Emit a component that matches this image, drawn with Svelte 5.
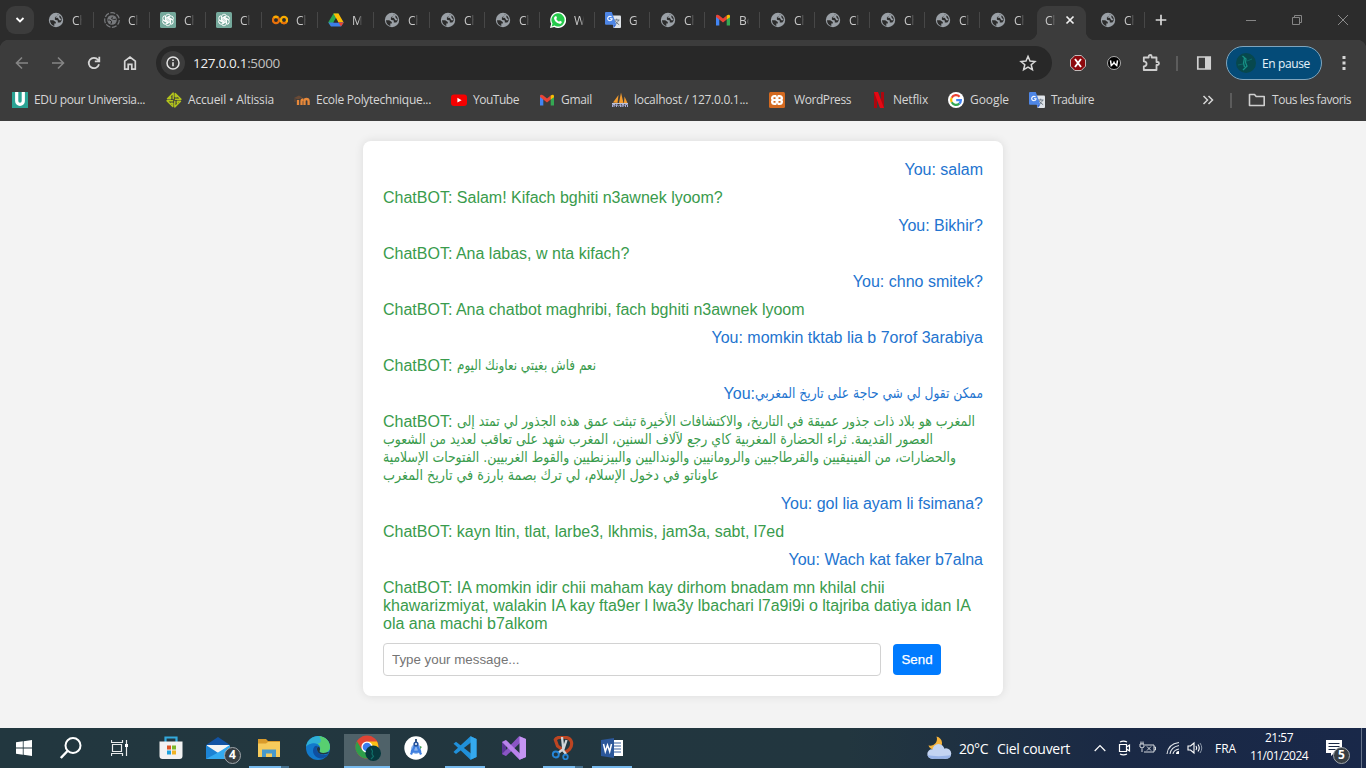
<script>
  const tabs = [
    ['globe', 'Ch'], ['dashed', 'Ch'], ['gpt', 'Ch'], ['gpt', 'Ch'], ['colab', 'Ch'], ['drive', 'M'],
    ['globe', 'Ch'], ['globe', 'Ch'], ['globe', 'Ch'], ['whatsapp', 'W'], ['translate', 'G'], ['globe', 'Ch'],
    ['gmail', 'Bo'], ['globe', 'Ch'], ['globe', 'Ch'], ['globe', 'Ch'], ['globe', 'Ch'], ['globe', 'Ch']
  ];

  // icon, label, slot width, icon gap, label width
  const bookmarks = [
    ['edu', 'EDU pour Universia...', 154, 6, 111],
    ['altissia', 'Accueil • Altissia', 128, 6, 86],
    ['moodle', 'Ecole Polytechnique...', 157, 6, 115],
    ['youtube', 'YouTube', 88, 6, 46],
    ['gmail', 'Gmail', 73, 6, 31],
    ['pma', 'localhost / 127.0.0.1...', 157, 6, 114],
    ['xampp', 'WordPress', 102, 9, 57],
    ['netflix', 'Netflix', 77, 6, 35],
    ['google', 'Google', 81, 6, 39],
    ['translate', 'Traduire', 90, 6, 43]
  ];

  const messages = [
    { who: 'user', text: 'You: salam' },
    { who: 'bot', text: 'ChatBOT: Salam! Kifach bghiti n3awnek lyoom?' },
    { who: 'user', text: 'You: Bikhir?' },
    { who: 'bot', text: 'ChatBOT: Ana labas, w nta kifach?' },
    { who: 'user', text: 'You: chno smitek?' },
    { who: 'bot', text: 'ChatBOT: Ana chatbot maghribi, fach bghiti n3awnek lyoom' },
    { who: 'user', text: 'You: momkin tktab lia b 7orof 3arabiya' },
    { who: 'bot', lines: [['ChatBOT: ', 'نعم فاش بغيتي نعاونك اليوم', 139]] },
    { who: 'user', lines: [['You:', 'ممكن تقول لي شي حاجة على تاريخ المغربي', 228]] },
    {
      who: 'bot',
      lines: [
        ['ChatBOT: ', 'المغرب هو بلاد ذات جذور عميقة في التاريخ، والاكتشافات الأخيرة تبثت عمق هذه الجذور لي تمتد إلى', 518],
        ['', 'العصور القديمة. ثراء الحضارة المغربية كاي رجع لآلاف السنين، المغرب شهد على تعاقب لعديد من الشعوب', 550],
        ['', 'والحضارات، من الفينيقيين والقرطاجيين والرومانيين والونداليين والبيزنطيين والقوط الغربيين. الفتوحات الإسلامية', 573],
        ['', 'عاوناتو في دخول الإسلام، لي ترك بصمة بارزة في تاريخ المغرب', 336]
      ]
    },
    { who: 'user', text: 'You: gol lia ayam li fsimana?' },
    { who: 'bot', text: 'ChatBOT: kayn ltin, tlat, larbe3, lkhmis, jam3a, sabt, l7ed' },
    { who: 'user', text: 'You: Wach kat faker b7alna' },
    {
      who: 'bot',
      text: 'ChatBOT: IA momkin idir chii maham kay dirhom bnadam mn khilal chii khawarizmiyat, walakin IA kay fta9er l lwa3y lbachari l7a9i9i o ltajriba datiya idan IA ola ana machi b7alkom'
    }
  ];

  // Spreads letter spacing so that a label takes a given width.
  function fit(node, width) {
    const natural = node.getBoundingClientRect().width;
    node.style.letterSpacing = (width - natural) / node.textContent.length + 'px';
  }
</script>

{#snippet icon(name)}
  <svg class="ico" viewBox="0 0 16 16" width="16" height="16">
    {#if name === 'globe'}
      <circle cx="8" cy="8" r="7.2" fill="#9aa0a6" />
      <path d="M2 8.2h3.2l2.6 1.7v1.6H6.3v2.4C3.800 13.200 2 11 2 8.200zM9 2.200v2L7.300 5.800H9.800L11.300 8.200H13.800M10 2.400C12.600 3.400 14 5.600 13.900 8.600L12.300 10.600H9.800V8.500L6.900 7.700V5.300L9.100 3.900z" fill="#2c2c2c" />
      <path d="M9.200 2.500 12 3.500 10.800 5.300H9z" fill="#9aa0a6" />
    {:else if name === 'dashed'}
      <circle cx="8" cy="8" r="7.300" fill="none" stroke="#77797c" stroke-width="1.200" stroke-dasharray="5 1.500" />
      <circle cx="8" cy="8" r="4.800" fill="#77797c" />
      <path d="M3.800 8h2l1.700 1.200v2H6.500M8.700 4.800 7.500 6.500 9.700 7.500 12 7.200" fill="none" stroke="#2c2c2c" stroke-width="1" />
    {:else if name === 'gpt'}
      <rect width="16" height="16" rx="1.500" fill="#75a99c" />
      <g fill="none" stroke="#fff" stroke-width=".9">
        {#each [0, 60, 120, 180, 240, 300] as a}
          <path transform="rotate({a} 8 8)" d="M5.400 9.500V4.900A2.700 2.700 0 0 1 10.200 3.300M6.900 8.700V5.900L10.600 3.800" />
        {/each}
      </g>
    {:else if name === 'colab'}
      <circle cx="4" cy="8" r="3.100" fill="none" stroke="#e8710a" stroke-width="2.300" />
      <path d="M6 5.700A3.100 3.100 0 0 0 1.700 5.800" fill="none" stroke="#f9ab00" stroke-width="2.300" />
      <circle cx="12" cy="8" r="3.100" fill="none" stroke="#f9ab00" stroke-width="2.300" />
      <path d="M9.800 10.200A3.100 3.100 0 0 0 14.200 10.200" fill="none" stroke="#e8710a" stroke-width="2.300" />
    {:else if name === 'drive'}
      <path d="M5.500 1.500h5L8 6 3 14.500.300 10.300z" fill="#28a851" />
      <path d="M5.500 1.500h5l5.200 9H10.400z" fill="#fbbc04" />
      <path d="M.300 10.500h15.400L13 14.600H3z" fill="#3d7de8" />
      <path d="M10.400 10.500h5.300L13 14.600z" fill="#ea4335" />
      <path d="M8 6.200 10.300 10.400H5.600z" fill="#2c2c2c" />
    {:else if name === 'whatsapp'}
      <path d="M0 16 1.200 11.800A8 8 0 1 1 4.200 14.900z" fill="#fff" />
      <path d="M1.600 14.400 2.500 11.600A6.600 6.600 0 1 1 4.600 13.600z" fill="#25c94b" />
      <path d="M5.200 4.200 6.400 4.300 7 6 6.200 7.100C6.900 8.400 7.700 9.100 9 9.700L10 8.700 11.800 9.700C11.900 11.400 10.400 11.900 9.400 11.700 6.700 11.100 4.700 9.200 4.100 6.800 3.900 5.700 4.500 4.500 5.200 4.200z" fill="#fff" />
    {:else if name === 'translate'}
      <path d="M6 3.500h9a1 1 0 0 1 1 1V15a1 1 0 0 1-1 1H8.500z" fill="#dfe3e8" />
      <path d="M9 8h5.500M11.700 6.700V8M13.500 8C13 10 11.500 11.500 9.500 12.700M10.200 8.700C11 10.500 12.500 11.700 14.200 12.700" fill="none" stroke="#64717d" stroke-width=".900" />
      <path d="M1 0h5.800l4.500 12.800H1a1 1 0 0 1-1-1V1a1 1 0 0 1 1-1z" fill="#4e86e6" />
      <path d="M8 12.800h3.300L8.800 16z" fill="#3367d6" />
      <path d="M6.500 5A2.200 2.200 0 1 0 7.100 6.700H5" fill="none" stroke="#fff" stroke-width="1.100" />
    {:else if name === 'gmail'}
      <path d="M1 3v10.500H4.300V6.500z" fill="#4285f4" />
      <path d="M15 3v10.500H11.700V6.500z" fill="#34a853" />
      <path d="M1 4.500C1 2.500 2.700 2.200 4.300 3.600L8 6.500 11.700 3.600V7.500L8 10.400 4.300 7.500 1 5z" fill="#ea4335" />
      <path d="M11.700 3.600C13.500 2.200 15 2.600 15 4.500V5.200L11.700 7.600z" fill="#fbbc04" />
    {:else if name === 'edu'}
      <rect width="16" height="16" fill="#2aa394" />
      <path d="M4.700 0V9A3.300 3.300 0 0 0 11.300 9V0" fill="none" stroke="#fff" stroke-width="3.200" />
    {:else if name === 'altissia'}
      <g fill="none" stroke="#b3c41c" stroke-width="1.400" stroke-linejoin="round">
        {#each [0, 90, 180, 270] as a}
          <path transform="rotate({a} 8 8)" d="M7.200 7.200V1L1.500 6.800H4.700V4.500" />
        {/each}
      </g>
    {:else if name === 'moodle'}
      <path d="M4 13V8M7.500 13V9.500Q7.500 7.500 9.300 7.500M10.500 13V9Q10.500 7 12.500 7T14.600 9V13" fill="none" stroke="#e8893a" stroke-width="2.300" />
      <path d="M0 6 5 3.500 8.500 5.500 4 7.500z" fill="#6a4a35" />
      <path d="M1 6.500V10" stroke="#6a4a35" />
    {:else if name === 'youtube'}
      <rect y="2.400" width="16" height="11.500" rx="3" fill="#f50000" />
      <path d="M6.400 5.700v4.900L10.600 8.200z" fill="#fff" />
    {:else if name === 'pma'}
      <path d="M1 10.500 6.500 3 5.500 11zM7 11 9 .500 11.500 11zM12 11 12.500 4.500 15.500 11z" fill="#f29b2e" />
      <path d="M0 11.500H16" stroke="#bdc4da" />
      <path d="M.500 15V12.500H3V14H1M4.500 15V12.300L6.500 14 8.500 12.300V15M10 15V12.500H12V14H10M13.500 15V12.500H15.500V15" fill="none" stroke="#a8add5" />
    {:else if name === 'xampp'}
      <rect width="16" height="16" rx="1.500" fill="#d46a20" />
      <rect x="2" y="3" width="12" height="10" rx="3.500" fill="#fff" />
      <path d="M7 2.500H9L8 5zM7 13.500H9L8 11zM1.500 7 3 8 1.500 9zM14.500 7 13 8 14.500 9zM4.500 5.300H6.500V7H4.500zM9.500 5.300h2V7h-2zM4.500 9H6.500v1.700h-2zM9.500 9h2v1.700h-2z" fill="#d46a20" />
    {:else if name === 'netflix'}
      <path d="M3 0H6V16H3zM10 0h3V16H10z" fill="#ad070f" />
      <path d="M3 0H7L13 16H9z" fill="#e30914" />
    {:else if name === 'google'}
      <circle cx="8" cy="8" r="8" fill="#fff" />
      <g fill="none" stroke-width="2.200">
        <path d="M11.600 4.700A4.900 4.900 0 0 0 3.700 5.700" stroke="#ea4335" />
        <path d="M3.700 5.700A4.900 4.900 0 0 0 3.700 10.300" stroke="#fbbc04" />
        <path d="M3.700 10.300A4.900 4.900 0 0 0 11.300 11.600" stroke="#34a853" />
        <path d="M11.300 11.600A4.900 4.900 0 0 0 12.900 8.100H8.200" stroke="#4285f4" />
      </g>
    {/if}
  </svg>
{/snippet}

<div class="screen">
  <div class="tabstrip">
    <div class="chev"><svg width="12" height="12" viewBox="0 0 12 12"><path d="M2.500 4 6 7.500 9.500 4" fill="none" stroke="#fff" stroke-width="1.800" /></svg></div>
    {#each tabs as [name, label], i}
      <div class="tab" class:narrow={i > 6} class:last={i === 17}>{@render icon(name)}<span class="cap">{label}</span></div>
    {/each}
    <div class="tab active"><span class="cap">Ch</span><svg width="10" height="10" viewBox="0 0 10 10"><path d="M1.500 1.500l7 7M8.500 1.500l-7 7" stroke="#f0f0f0" stroke-width="1.700" /></svg></div>
    <div class="tab after">{@render icon('globe')}<span class="cap">Ch</span></div>
    <svg class="plus" width="12" height="12" viewBox="0 0 12 12"><path d="M6 .700V11.300M.700 6H11.300" stroke="#d8d8d8" stroke-width="1.700" /></svg>
    <div class="winctl">
      <svg width="12" height="12" viewBox="0 0 12 12"><path d="M1 6.500h10" stroke="#858585" /></svg>
      <svg width="12" height="12" viewBox="0 0 12 12"><path d="M1.500 3.500h7v7h-7zM3.500 3V1.500h7v7H9" fill="none" stroke="#858585" /></svg>
      <svg width="12" height="12" viewBox="0 0 12 12"><path d="M1 1l10 10M11 1 1 11" stroke="#8c8c8c" /></svg>
    </div>
  </div>

  <div class="toolbar">
    <div class="nav">
      <svg width="16" height="16" viewBox="0 0 16 16"><path d="M14 8H2.700M8 2.500 2.500 8 8 13.500" fill="none" stroke="#858585" stroke-width="1.600" /></svg>
      <svg width="16" height="16" viewBox="0 0 16 16"><path d="M2 8H13.300M8 2.500 13.500 8 8 13.500" fill="none" stroke="#858585" stroke-width="1.600" /></svg>
      <svg width="16" height="16" viewBox="0 0 16 16"><path d="M13 9.300A5.200 5.200 0 1 1 12 4.700L13.300 6M13.300 1.800V6.300H8.800" fill="none" stroke="#d6d6d6" stroke-width="1.800" /></svg>
      <svg width="16" height="16" viewBox="0 0 16 16"><path d="M2.700 14.200V6.200L8 2l5.300 4.200v8H9.800V9.300H6.200V14.200z" fill="none" stroke="#d6d6d6" stroke-width="1.700" /></svg>
    </div>
    <div class="omni">
      <div class="info"><svg width="16" height="16" viewBox="0 0 16 16"><circle cx="8" cy="8" r="6" fill="none" stroke="#e3e3e3" stroke-width="1.500" /><path d="M8 7.300V11.300M8 4.500V6" stroke="#e3e3e3" stroke-width="1.600" /></svg></div>
      <span class="url" use:fit={87}>127.0.0.1<i>:5000</i></span>
      <svg class="star" width="18" height="18" viewBox="0 0 18 18"><path d="M9 2.300 11 7 16 7.500 12.200 10.800 13.400 15.700 9 13.100 4.600 15.700 5.800 10.800 2 7.500 7 7z" fill="none" stroke="#d8d8d8" stroke-width="1.500" /></svg>
    </div>
    <div class="ext">
      <svg width="18" height="18" viewBox="0 0 18 18"><path d="M5.800 1.500h6.400L16.500 5.800v6.400L12.200 16.500H5.800L1.500 12.200V5.800z" fill="#8d090d" stroke="#ccc" stroke-width=".9" /><path d="M6 5l6 8M12 5l-6 8" stroke="#fff" stroke-width="1.900" /></svg>
      <svg width="16" height="16" viewBox="0 0 16 16"><circle cx="8" cy="8" r="6.500" fill="#000" stroke="#bbb" stroke-width=".9" /><path d="M4.500 5.300 5.300 10.500 8 8V6.500M8 8 10.700 10.500 11.500 5.300" fill="none" stroke="#fff" stroke-width="1.500" /></svg>
      <svg width="18" height="18" viewBox="0 0 18 18"><path d="M1.800 3.500H6.700V2.500a1.500 1.500 0 0 1 3 0v1H14.500V8h1a1.500 1.500 0 0 1 0 3h-1v5H1.800V12.300C5.500 12.300 5.500 7.300 1.800 7.300z" fill="none" stroke="#cecece" stroke-width="1.800" stroke-linejoin="round" /></svg>
      <b class="bar"></b>
      <svg width="16" height="16" viewBox="0 0 16 16"><path d="M1.800 2h12.400v12H1.800z" fill="none" stroke="#d0d0d0" stroke-width="1.700" /><path d="M9 2h5v12H9z" fill="#d0d0d0" /></svg>
      <div class="pill">
        <svg width="20" height="20" viewBox="0 0 20 20"><circle cx="10" cy="10" r="10" fill="#07484d" /><path d="M6.500 3 10 6 9.500 9.500 11 13 7 17M8.500 5 7.500 10 8.500 14" fill="none" stroke="#169185" stroke-width="1.300" /><path d="M2 12 7 11M11 8 16 6" stroke="#0d6a68" /></svg>
        <span use:fit={48}>En pause</span>
      </div>
      <svg width="4" height="16" viewBox="0 0 4 16"><path d="M.500 1h3v3h-3zM.500 6.500h3v3h-3zM.500 12h3v3h-3z" fill="#d6d6d6" /></svg>
    </div>
  </div>

  <div class="bookmarks">
    {#each bookmarks as [name, label, slot, gap, width]}
      <div class="bm" style="width: {slot}px; gap: {gap}px">{@render icon(name)}<span use:fit={width}>{label}</span></div>
    {/each}
    <div class="bmend">
      <svg width="12" height="12" viewBox="0 0 12 12"><path d="M1.500 2 5.500 6 1.500 10M6.500 2 10.500 6 6.500 10" fill="none" stroke="#d6d6d6" stroke-width="1.500" /></svg>
      <b class="bar"></b>
      <svg width="18" height="14" viewBox="0 0 18 14"><path d="M1.500 1.500h5l1.700 2h8v9H1.500z" fill="none" stroke="#cecece" stroke-width="1.600" stroke-linejoin="round" /></svg>
      <span use:fit={79}>Tous les favoris</span>
    </div>
  </div>

  <main>
    <div class="card">
      {#each messages as m}
        <div class="msg {m.who}">
          {#if m.text}
            {m.text}
          {:else}
            {#each m.lines as [lead, words, width]}
              <div class="line"><span>{lead}</span><svg {width} height="18"><text x="0" y="13" direction="ltr" textLength={width} lengthAdjust="spacingAndGlyphs">{words}</text></svg></div>
            {/each}
          {/if}
        </div>
      {/each}
      <div class="form">
        <input type="text" placeholder="Type your message..." />
        <button>Send</button>
      </div>
    </div>
  </main>

  <footer>
    <div class="apps">
      <div class="app"><svg width="16" height="16" viewBox="0 0 16 16"><path d="M0 2.300 6.800 1.300V7.600H0zM7.600 1.200 16 0V7.600H7.600zM0 8.400H6.800V14.700L0 13.700zM7.600 8.400H16V16L7.600 14.800z" fill="#fff" /></svg></div>
      <div class="app nudge"><svg width="24" height="24" viewBox="0 0 24 24"><circle cx="14" cy="9.500" r="7.500" fill="none" stroke="#fff" stroke-width="2" /><path d="M8.500 15 1.800 22" stroke="#fff" stroke-width="2.500" /></svg></div>
      <div class="app nudge"><svg width="18" height="18" viewBox="0 0 18 18"><path d="M.500 1V3.500h11V1M.500 17V14.500h11V17M1.500 5.500h9v7h-9zM15.500 1V17" fill="none" stroke="#e8eaeb" stroke-width="1.200" /><path d="M14 5h3v3h-3z" fill="#fff" /></svg></div>
      <div class="app"><svg width="24" height="24" viewBox="0 0 24 24"><path d="M6.500 6V1.500h11V6" fill="none" stroke="#33a9dc" stroke-width="2.200" /><path d="M.500 5.500h23V20a3 3 0 0 1-3 3h-17a3 3 0 0 1-3-3z" fill="#f2f2f2" /><path d="M8 9.500h4v4H8z" fill="#dd5425" /><path d="M13 9.500h4v4h-4z" fill="#7bb829" /><path d="M8 14.500h4v4H8z" fill="#20a2dd" /><path d="M13 14.500h4v4h-4z" fill="#f0b323" /></svg></div>
      <div class="app nudge"><svg width="24" height="24" viewBox="0 0 24 24"><path d="M0 9 12 1 24 9V12H0z" fill="#1253a4" /><path d="M1 9h22v9H1z" fill="#f4f4f4" /><path d="M0 9 13 17.500 24 9V23H0z" fill="#1c83d4" /><path d="M0 23 12 16.500 24 9V23z" fill="#33aaf0" /></svg><em class="badge mail">4</em></div>
      <div class="app run split"><svg width="24" height="24" viewBox="0 0 24 24"><path d="M1 3h8l2 2h12v4H1z" fill="#d99b2b" /><path d="M1 7.500H9L11 6H23V21H1z" fill="#f6cb5c" /><path d="M5 21V13.500h14V21H15V17.500H9V21z" fill="#4799cc" /></svg></div>
      <div class="app"><svg width="24" height="24" viewBox="0 0 24 24"><circle cx="12" cy="12" r="12" fill="#1279cb" /><path d="M0 11C1 3.500 7 0 12 0 19 0 24 5 24 11 24 15 20.500 17 17 17 14 17 12.800 15.800 13.800 14.300 15.500 11 12.500 7.300 8.500 7.300 4.500 7.300 1 9 0 11z" fill="#2fb0d6" /><path d="M13 0C20 .500 24 5.500 24 11 24 15 20.500 17 17 17 14 17 12.800 15.800 13.800 14.300 15 11.500 14 9 11.500 7.700 15 7.500 16 4 13 0z" fill="#58cf70" /><path d="M8.500 10.500C4.500 16 9 22.500 16 22.500 19 22 21.500 20 22.500 18 17 20.500 11.500 18 10.800 13.500 10.700 12 11.200 11 12 10.300 11 9.500 9.500 9.500 8.500 10.500z" fill="#0f4fa0" /><path d="M11 13.500C11.500 18 17 20 22.500 17 23 16.300 22.500 15.800 21.500 16.200 17.500 17.500 12.500 17 13.700 14.500 14.500 13 14 11 12.300 10.400 11.300 11.200 11 12 11 13.500z" fill="#22363f" /></svg></div>
      <div class="app run current"><svg width="26" height="26" viewBox="0 0 26 26"><circle cx="12" cy="12" r="11.500" fill="#e04434" /><path d="M2 6.200A11.500 11.500 0 0 0 12 23.500L17 15 12 12 7 15z" fill="#2f9e4a" /><path d="M22 6.500A11.500 11.500 0 0 1 12 23.500L16.500 14.500 13 6.500z" fill="#fbc116" /><circle cx="12" cy="12" r="5.600" fill="#fff" /><circle cx="12" cy="12" r="4.300" fill="#3b7ded" /><circle cx="18.200" cy="18.200" r="7.800" fill="#07393e" /><path d="M16 13.500 17.500 16 17 19 18.500 21.500 16 24" fill="none" stroke="#0f6f69" stroke-width="1.200" /></svg></div>
      <div class="app"><svg width="24" height="24" viewBox="0 0 24 24"><circle cx="12" cy="12" r="11.700" fill="#fff" /><circle cx="12" cy="13" r="5" fill="#8fb5ea" /><path d="M12 7 7 18.500M12 7l5 11.500M7 14.500Q12 17 17 14.500" fill="none" stroke="#3f7fe0" stroke-width="2.200" /><path d="M12 3V6" stroke="#24466f" stroke-width="1.800" /><circle cx="12" cy="8" r="2.600" fill="#24529c" /><circle cx="12" cy="8" r="1" fill="#fff" /><path d="M16 10l2 1-2 2z" fill="#46a652" /></svg></div>
      <div class="app run"><svg width="24" height="24" viewBox="0 0 24 24"><path d="M17.500.300 23.500 3V21L17.500 23.800 2 9 .500 7.800 3 5.800 18 17.500V6.500L3 18 .500 16 1.700 14.800z" fill="#2090da" /><path d="M17.500.300 23.500 3V21L17.500 23.800z" fill="#35a9ee" /></svg></div>
      <div class="app"><svg width="24" height="24" viewBox="0 0 24 24"><path d="M0 6 4 4V20L0 18z" fill="#5b3596" /><path d="M4 20 0 18 17 .300 24 3 18 7z" fill="#8a55c4" /><path d="M0 6 4 4 18 17.500 24 21 17.500 23.800z" fill="#b982ea" /><path d="M17.500.300 24 3V21L17.500 23.800z" fill="#c595f3" /></svg></div>
      <div class="app run split"><svg width="24" height="24" viewBox="0 0 24 24"><path d="M4 4C6 0 19-.5 20.500 6 21.500 12 17 15.500 13 16.500M4 3 6.500 10 12 14" fill="none" stroke="#bd4522" stroke-width="3.200" /><path d="M11 1 12.500 15 15 18M15.500 4 12.500 13 7 17" fill="none" stroke="#d0d5d9" stroke-width="2.300" /><circle cx="4.800" cy="18.500" r="3" fill="none" stroke="#2585d6" stroke-width="1.900" /><circle cx="14.500" cy="21" r="2.300" fill="none" stroke="#2585d6" stroke-width="1.800" /></svg></div>
      <div class="app run"><svg width="24" height="24" viewBox="0 0 24 24"><path d="M12 4h11v16H12z" fill="#fff" /><path d="M14 7h7M14 10h7M14 13h7M14 16h7" stroke="#345f9f" /><path d="M1 4 14 2V22L1 20z" fill="#2b579a" /><path d="M3.500 8 5.300 15.500 7.500 9 9.700 15.500 11.500 8" fill="none" stroke="#fff" stroke-width="1.500" /></svg></div>
    </div>
    <div class="weather">
      <svg width="26" height="24" viewBox="0 0 26 24"><path d="M10.500.500C17 2 18 10 12.500 13 8 15 3.500 13 2.500 9.500 8 10.500 12.500 6 10.500.500z" fill="#f6b43c" /><g fill="#c3d4f2"><circle cx="12.500" cy="14" r="6" /><circle cx="6" cy="18" r="4.700" /><circle cx="20" cy="17.500" r="5.200" /><path d="M6 15H20V22.700H6z" /></g><path d="M1.500 19C6 20.500 19 20.500 25 19 24.500 21.500 22.500 22.700 20 22.700H6C4 22.700 2 21.500 1.500 19z" fill="#98b4e8" /></svg>
      <span use:fit={29}>20°C</span><span class="sky" use:fit={73}>Ciel couvert</span>
    </div>
    <div class="tray">
      <svg width="12" height="8" viewBox="0 0 12 8"><path d="M.700 7 6 1.500 11.300 7" fill="none" stroke="#fff" stroke-width="1.200" /></svg>
      <svg class="cam" width="14" height="16" viewBox="0 0 14 16"><path d="M1.500 4.500h7v7h-7zM8.500 7 11.500 5V11L8.500 9M2 2Q5.500 .300 9 2M2 14Q5.500 15.700 9 14" fill="none" stroke="#fff" stroke-width="1.200" /></svg>
      <svg class="batt" width="18" height="14" viewBox="0 0 18 14"><path d="M6 4h9v7H5M15 6h1.500v3H15M1 3h4V6Q3 8 1 6zM2 3V.500M4 3V.500M3 7.500V11M8 5.500l4 4M12 5.500l-4 4" fill="none" stroke="#d6dbe0" stroke-width="1" /></svg>
      <svg class="wifi" width="14" height="14" viewBox="0 0 14 14"><g fill="none" stroke="#dfe3e8" stroke-width="1.100"><path d="M1 13Q2 3 13 1.500M4 13Q5 6 13 4.500M7 13Q7.500 9 13 8" /></g><path d="M10 13a3 3 0 0 1 3-3v3z" fill="#fff" /></svg>
      <svg class="vol" width="16" height="14" viewBox="0 0 16 14"><path d="M1 5H3.500L7 2V12L3.500 9H1zM9 5Q10.500 7 9 9M11 3.500Q13.500 7 11 10.500" fill="none" stroke="#fff" stroke-width="1.100" /><path d="M13 2Q16.500 7 13 12" fill="none" stroke="#8d99aa" /></svg>
      <span class="lang" use:fit={21}>FRA</span>
      <div class="clock"><span use:fit={28}>21:57</span><span use:fit={58}>11/01/2024</span></div>
      <div class="notes"><svg width="16" height="16" viewBox="0 0 16 16"><path d="M0 0h16v13H8L5 16V13H0z" fill="#fff" /><path d="M2.500 3.500h11M2.500 6.500h11M2.500 9.500h7" stroke="#1a2945" /></svg><em class="badge">5</em></div>
      <b class="peek"></b>
    </div>
  </footer>
</div>

<style>
  :global(body) { margin: 0; overflow: hidden; }
  .screen { width: 1366px; height: 768px; display: flex; flex-direction: column; background: #f3f3f3; font-family: 'Open Sans', 'Noto Sans', sans-serif; font-size: 12px; color: #d6d6d6; }
  svg { display: block; flex: none; }
  span { white-space: nowrap; }
  .tabstrip { height: 40px; flex: none; display: flex; align-items: center; background: #2c2c2c; }
  .chev { width: 28px; height: 28px; margin: 0 4px 0 6px; border-radius: 9px; background: #3c3c3c; display: grid; place-items: center; flex: none; }
  .tab { box-sizing: border-box; width: 56px; height: 16px; padding-left: 10px; display: flex; align-items: center; gap: 8px; border-right: 1px solid #474747; flex: none; }
  .tab.narrow { width: 55px; }
  .tab.last { border-color: transparent; }
  .cap { width: 10px; overflow: hidden; line-height: 17px; color: #c8c8c8; mask-image: linear-gradient(90deg, #000 65%, transparent); }
  .tab.active { position: relative; width: 49px; height: 34px; margin: 6px 0 0 2px; padding: 0 11px 6px 8px; border: 0; border-radius: 9px 9px 0 0; background: #3c3c3c; justify-content: space-between; gap: 0; }
  .tab.active::before, .tab.active::after { content: ''; position: absolute; bottom: 0; width: 9px; height: 9px; }
  .tab.active::before { left: -9px; background: radial-gradient(circle at 0 0, transparent 9px, #3c3c3c 9.500px); }
  .tab.active::after { right: -9px; background: radial-gradient(circle at 100% 0, transparent 9px, #3c3c3c 9.500px); }
  .tab.after { width: 59px; padding-left: 14px; }
  .plus { margin-left: 10px; }
  .winctl { margin-left: auto; margin-right: 17px; display: flex; gap: 34px; }
  .toolbar { height: 46px; flex: none; display: flex; align-items: center; background: linear-gradient(#3c3c3c, #3c3c3c) 0 9px no-repeat, radial-gradient(circle at 9px 9px, #3c3c3c 9px, #2c2c2c 9.500px) 0 0 / 9px 9px no-repeat, radial-gradient(circle at 0 9px, #3c3c3c 9px, #2c2c2c 9.500px) 100% 0 / 9px 9px no-repeat, #3c3c3c; }
  .nav { width: 156px; padding-left: 14px; box-sizing: border-box; display: flex; gap: 20px; }
  .omni { box-sizing: border-box; width: 896px; height: 34px; border-radius: 17px; background: #282828; display: flex; align-items: center; padding: 0 15px 0 5px; }
  .info { width: 24px; height: 24px; border-radius: 50%; background: #3c3c3c; display: grid; place-items: center; }
  .url { margin-left: 8px; font-size: 13.500px; color: #f0f0f0; }
  .url i { font-style: normal; color: #c2c2c2; }
  .star { margin-left: auto; }
  .ext { flex: 1; display: flex; align-items: center; padding-left: 17px; }
  .ext > :nth-child(2) { margin-left: 19px; }
  .ext > :nth-child(3) { margin-left: 20px; }
  .ext > :nth-child(4) { margin-left: 16px; }
  .ext > :nth-child(5) { margin-left: 18px; }
  .ext > :nth-child(7) { margin-left: 20px; }
  .bar { width: 2px; height: 15px; background: #5c5c5c; }
  .pill { box-sizing: border-box; width: 96px; height: 34px; margin-left: 14px; padding-left: 9px; border: 1px solid #7fa5bd; border-radius: 17px; background: #044b78; display: flex; align-items: center; gap: 6px; color: #e6f3fb; }
  .bookmarks { height: 35px; flex: none; box-sizing: border-box; padding: 0 15px 7px 12px; display: flex; align-items: center; background: #3c3c3c; }
  .bm { display: flex; align-items: center; flex: none; }
  .bm span, .bmend span { padding-bottom: 1px; }
  .bmend { margin-left: auto; display: flex; align-items: center; }
  .bmend .bar { margin: 0 16px; }
  .bmend span { margin-left: 6px; }
  main { height: 607px; flex: none; box-sizing: border-box; padding-top: 20px; background: #f3f3f3; }
  .card { box-sizing: border-box; width: 640px; height: 555px; margin: 0 auto; padding: 20px; border-radius: 8px; background: #fff; box-shadow: 0 0 10px rgba(0, 0, 0, .1); font: 16px/18px 'Liberation Sans', Arial, sans-serif; }
  .msg { margin-bottom: 10px; }
  .user { text-align: right; color: #2374cf; }
  .bot { color: #399b4c; }
  .line { display: flex; height: 18px; }
  .line span { white-space: pre; }
  .line svg { overflow: visible; }
  .line text { font: 14.500px 'DejaVu Sans', sans-serif; fill: currentColor; }
  .user .line { justify-content: flex-end; }
  .form { display: flex; align-items: center; gap: 12px; }
  input { box-sizing: border-box; width: 498px; height: 33px; margin: 0; padding: 8px; border: 1px solid #d2d2d2; border-radius: 4px; font: 13.330px 'Liberation Sans', Arial, sans-serif; }
  input::placeholder { color: #757575; }
  button { width: 48px; height: 31px; padding: 0; border: 0; border-radius: 4px; background: #007bff; color: #fff; font: 13.330px 'Liberation Sans', Arial, sans-serif; -webkit-text-stroke: .25px #fff; }
  footer { height: 40px; flex: none; display: flex; align-items: center; background: linear-gradient(90deg, #22373f 0, #22363f 62%, #1a2945 82%, #192849); color: #fff; font-size: 14px; }
  .apps { display: flex; height: 40px; }
  .app { position: relative; box-sizing: border-box; width: 49px; display: grid; place-items: center; }
  .app:first-child { width: 48px; }
  .app.nudge { padding-right: 3px; }
  .run::after { content: ''; position: absolute; left: 5px; right: 4px; bottom: 0; height: 2px; background: #76b9ed; }
  .run.split::after { background: linear-gradient(90deg, #76b9ed 80%, #45708e 80%); }
  .app.current { background: linear-gradient(#4f6269, #4f6269) 2px 6px / 46px 34px no-repeat; padding-left: 2px; }
  .current::after { left: 2px; right: 1px; }
  .badge { position: absolute; right: 3px; bottom: 4px; box-sizing: border-box; width: 17px; height: 17px; border: 1px solid #a0a6ab; border-radius: 50%; background: #373e43; color: #fff; font: 700 12px/14px 'Open Sans', sans-serif; text-align: center; }
  .weather { display: flex; align-items: center; margin-left: auto; }
  .weather span { margin-left: 7px; }
  .weather .sky { margin-left: 9px; }
  .tray { display: flex; align-items: center; height: 40px; margin-left: 24px; }
  .cam { margin-left: 12px; }
  .batt { margin-left: 7px; }
  .wifi { margin-left: 9px; }
  .vol { margin-left: 7px; }
  .lang { margin-left: 12px; font-size: 12px; }
  .clock { width: 58px; margin-left: 14px; display: flex; flex-direction: column; align-items: center; font-size: 12px; line-height: 18px; padding-bottom: 2px; }
  .notes { position: relative; margin-left: 18px; }
  .notes .badge { right: -8px; bottom: -8px; }
  .peek { width: 1px; height: 40px; margin: 0 4px 0 19px; background: #66738a; }
</style>
